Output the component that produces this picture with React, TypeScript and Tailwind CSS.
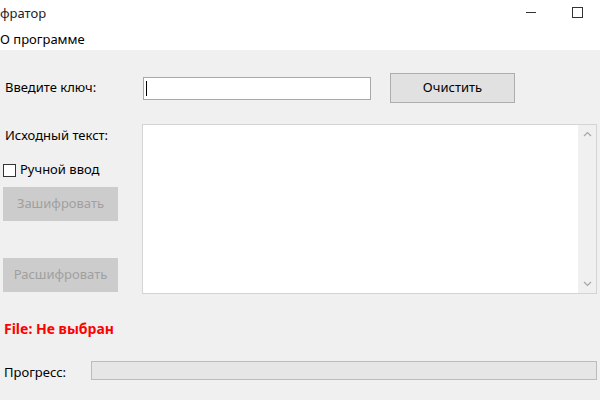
export default function App() {
  return (
    <div className="w-[600px] h-[400px] overflow-hidden bg-[#f0f0f0] text-[13px] text-black" style={{ fontFamily: '"Noto Sans", "Open Sans", sans-serif' }}>
      {/* title bar */}
      <div className="h-[30px] bg-white flex items-center">
        <span className="flex-1 text-[13px] leading-none text-[#222] -mt-[3px]">фратор</span>
        <div className="w-[46px] h-[30px] flex items-center justify-center">
          <div className="w-[10px] h-px bg-[#333] -mt-[6px]" />
        </div>
        <div className="w-[46px] h-[30px] flex items-center justify-center">
          <div className="w-[11px] h-[11px] border border-[#333] -mt-[5px]" />
        </div>
      </div>

      {/* menu */}
      <div className="h-[20px] bg-white flex items-center">
        <span className="leading-none -mt-[2px]">О программе</span>
      </div>

      {/* key row */}
      <div className="mt-[23px] h-[30px] flex items-center">
        <span className="w-[143px] pl-[5px]">Введите ключ:</span>
        <div className="w-[228px] h-[23px] bg-white border border-[#a8a8a8] flex items-center pl-[2px]">
          <div className="w-px h-[15px] bg-black" />
        </div>
        <button className="ml-[19px] w-[125px] h-[30px] bg-[#e1e1e1] border border-[#adadad] text-[13px]">Очистить</button>
      </div>

      {/* source text */}
      <div className="mt-[21px] flex">
        <div className="w-[142px] pl-[3px] flex flex-col">
          <span className="pl-[2px] mt-[2px] h-[18px] leading-[18px]">Исходный текст:</span>
          <label className="mt-[17px] h-[18px] flex items-center gap-[4px]">
            <span className="w-[13px] h-[13px] bg-white border border-[#333]" />
            <span>Ручной ввод</span>
          </label>
          <button className="mt-[8px] w-[115px] h-[34px] bg-[#cccccc] text-[#a0a0a0] text-[13px]">Зашифровать</button>
          <button className="mt-[37px] w-[115px] h-[34px] bg-[#cccccc] text-[#a0a0a0] text-[13px]">Расшифровать</button>
        </div>
        <div className="w-[455px] h-[170px] bg-white border border-[#d4d4d4] flex justify-end">
          <div className="w-[18px] h-full bg-[#f0f0f0] flex flex-col items-center justify-between py-[6px]">
            <svg width="9" height="6" viewBox="0 0 9 6" fill="none" stroke="#a6a6a6" strokeWidth="1.2">
              <path d="M1 5 L4.5 1.5 L8 5" />
            </svg>
            <svg width="9" height="6" viewBox="0 0 9 6" fill="none" stroke="#a6a6a6" strokeWidth="1.2">
              <path d="M1 1 L4.5 4.5 L8 1" />
            </svg>
          </div>
        </div>
      </div>

      {/* file status */}
      <div className="mt-[26px] pl-[4px] h-[18px] leading-[18px] text-[14px] font-bold text-[#ff0000]">File: Не выбран</div>

      {/* progress */}
      <div className="mt-[20px] flex items-center">
        <span className="w-[91px] pl-[4px] mt-[5px]">Прогресс:</span>
        <div className="w-[506px] h-[19px] bg-[#e6e6e6] border border-[#bcbcbc]" />
      </div>
    </div>
  );
}
